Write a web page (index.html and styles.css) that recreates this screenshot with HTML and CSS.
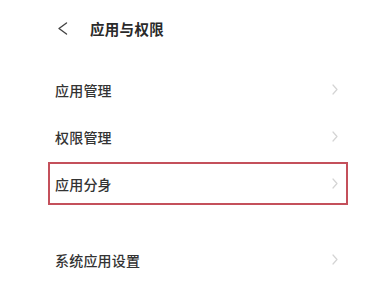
FILE: index.html
```html
<!DOCTYPE html>
<html lang="zh">
<head>
<meta charset="utf-8">
<link rel="stylesheet" href="styles.css">
</head>
<body>
<div class="page">
  <header class="header">
    <svg class="back" width="10" height="13" viewBox="0 0 10 13"><polyline points="8.5,1 1,6.5 8.5,12" fill="none" stroke="#444" stroke-width="1.4" stroke-linecap="round" stroke-linejoin="round"/></svg>
    <span class="title">应用与权限</span>
  </header>
  <div class="list">
    <div class="row"><span class="label">应用管理</span><svg class="chev" width="6" height="11" viewBox="0 0 6 11"><polyline points="1,1 5,5.5 1,10" fill="none" stroke="#d4d4d4" stroke-width="1.2" stroke-linecap="round" stroke-linejoin="round"/></svg></div>
    <div class="row"><span class="label">权限管理</span><svg class="chev" width="6" height="11" viewBox="0 0 6 11"><polyline points="1,1 5,5.5 1,10" fill="none" stroke="#d4d4d4" stroke-width="1.2" stroke-linecap="round" stroke-linejoin="round"/></svg></div>
    <div class="row highlight"><span class="label">应用分身</span><svg class="chev" width="6" height="11" viewBox="0 0 6 11"><polyline points="1,1 5,5.5 1,10" fill="none" stroke="#d4d4d4" stroke-width="1.2" stroke-linecap="round" stroke-linejoin="round"/></svg></div>
  </div>
  <div class="list second">
    <div class="row"><span class="label">系统应用设置</span><svg class="chev" width="6" height="11" viewBox="0 0 6 11"><polyline points="1,1 5,5.5 1,10" fill="none" stroke="#d4d4d4" stroke-width="1.2" stroke-linecap="round" stroke-linejoin="round"/></svg></div>
  </div>
</div>
</body>
</html>
```
FILE: styles.css
```css
html, body {
  margin: 0;
  padding: 0;
  background: #ffffff;
}
.page {
  width: 387px;
  height: 308px;
  font-family: "Noto Sans CJK SC", "Noto Sans", sans-serif;
  color: #333;
}
.header {
  height: 56px;
  display: flex;
  align-items: center;
  padding-left: 58px;
  gap: 22px;
}
.back {
  display: block;
}
.title {
  font-size: 14.5px;
  font-weight: 700;
  color: #2a2a2a;
  letter-spacing: 0.3px;
}
.list {
  margin: 10px 37px 0 46px;
  display: flex;
  flex-direction: column;
}
.list.second {
  margin-top: 29px;
}
.row {
  height: 47px;
  display: flex;
  align-items: center;
  justify-content: space-between;
  padding: 0 12px 0 9px;
}
.label {
  font-size: 14px;
  font-weight: 500;
  color: #333;
  letter-spacing: 0.2px;
}
.chev {
  display: block;
}
.highlight {
  outline: 2px solid #c4505b;
  outline-offset: -4px;
}
```
